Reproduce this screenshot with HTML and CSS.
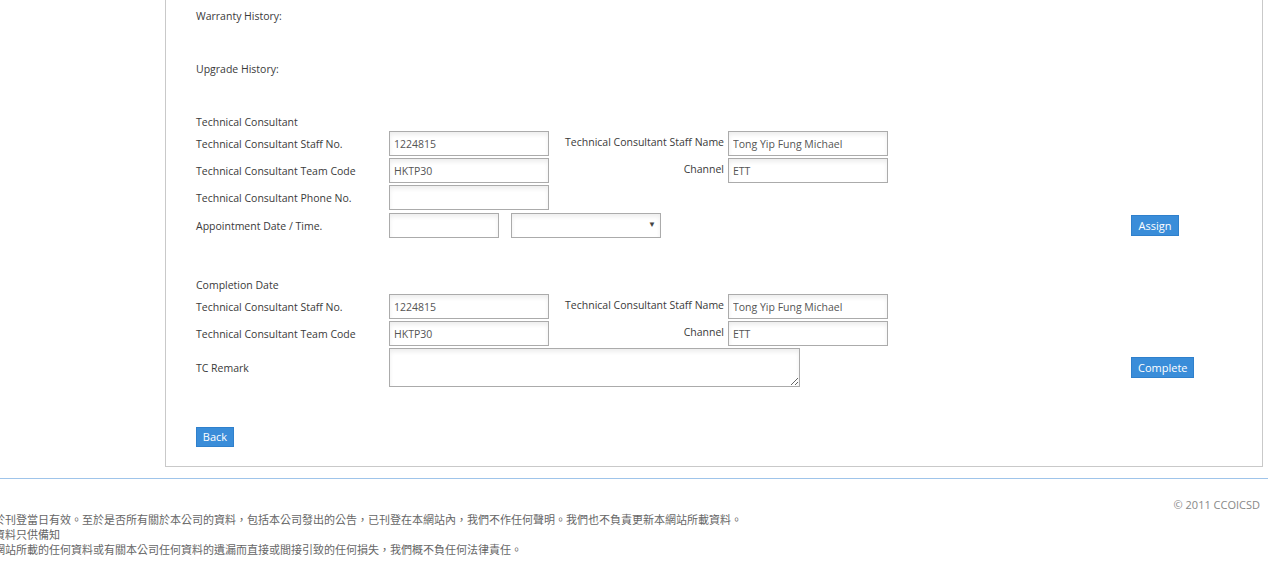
FILE: index.html
```html
<!DOCTYPE html>
<html>
<head>
<meta charset="utf-8">
<link rel="stylesheet" href="styles.css">
</head>
<body>
<div class="panel">
  <div class="section-title history">Warranty History:</div>
  <div class="section-title history">Upgrade History:</div>

  <div class="section-title">Technical Consultant</div>
  <div class="form-grid">
    <div class="lbl">Technical Consultant Staff No.</div>
    <input class="field" type="text" value="1224815">
    <div class="rlbl">Technical Consultant Staff Name</div>
    <input class="field" type="text" value="Tong Yip Fung Michael">

    <div class="lbl">Technical Consultant Team Code</div>
    <input class="field" type="text" value="HKTP30">
    <div class="rlbl">Channel</div>
    <input class="field" type="text" value="ETT">

    <div class="lbl">Technical Consultant Phone No.</div>
    <input class="field" type="text" value="">
    <div class="spacer-3"></div>

    <div class="lbl appt">Appointment Date / Time.</div>
    <div class="datetime appt">
      <input class="field date" type="text" value="">
      <div class="select-wrap"><select class="select"><option></option></select></div>
    </div>
    <button class="btn assign appt">Assign</button>
  </div>

  <div class="section-title completion">Completion Date</div>
  <div class="form-grid">
    <div class="lbl">Technical Consultant Staff No.</div>
    <input class="field" type="text" value="1224815">
    <div class="rlbl">Technical Consultant Staff Name</div>
    <input class="field" type="text" value="Tong Yip Fung Michael">

    <div class="lbl">Technical Consultant Team Code</div>
    <input class="field" type="text" value="HKTP30">
    <div class="rlbl">Channel</div>
    <input class="field" type="text" value="ETT">

    <div class="lbl">TC Remark</div>
    <textarea class="remark"></textarea>
    <button class="btn complete">Complete</button>
  </div>

  <div class="back-row"><button class="btn">Back</button></div>
</div>

<footer class="footer">
  <div class="copyright">© 2011 CCOICSD</div>
  <div class="disclaimer">
    <p>於刊登當日有效。至於是否所有關於本公司的資料，包括本公司發出的公告，已刊登在本網站內，我們不作任何聲明。我們也不負責更新本網站所載資料。</p>
    <p>資料只供備知</p>
    <p>網站所載的任何資料或有關本公司任何資料的遺漏而直接或間接引致的任何損失，我們概不負任何法律責任。</p>
  </div>
</footer>
</body>
</html>
```

FILE: styles.css
```css
html, body {
  margin: 0;
  padding: 0;
  background: #fff;
}

body {
  font-family: "Open Sans", "Liberation Sans", sans-serif;
  font-size: 10.5px;
  color: #3a3a3a;
  width: 1278px;
  overflow: hidden;
}

.panel {
  margin-left: 165px;
  width: 1098px;
  box-sizing: border-box;
  border: 1px solid #c9c9c9;
  border-top: none;
  padding: 8px 0 19px 30px;
}

.section-title {
  line-height: 16px;
  height: 16px;
  margin-bottom: 1px;
}

.section-title.history {
  margin-bottom: 37px;
}

.section-title.completion {
  margin-top: 39px;
}

.form-grid {
  display: grid;
  grid-template-columns: 193px 160px 179px 160px 243px auto;
  grid-auto-rows: auto;
  row-gap: 2px;
  align-items: center;
}

.lbl {
  grid-column: 1;
  line-height: 16px;
  padding-top: 1px;
}

.rlbl {
  text-align: right;
  padding-right: 4px;
  line-height: 16px;
  align-self: start;
  padding-top: 3px;
}

.spacer-3 {
  grid-column: 3 / span 4;
}

.appt {
  margin-top: 1px;
}

.field {
  box-sizing: border-box;
  width: 160px;
  height: 25px;
  margin: 0;
  border: 1px solid #ababab;
  border-radius: 0;
  padding: 0 4px;
  font-family: "Open Sans", "Liberation Sans", sans-serif;
  font-size: 10.5px;
  color: #555;
  background: #fff;
  box-shadow: inset 0 3px 4px rgba(0, 0, 0, 0.07);
  outline: none;
}

.datetime {
  grid-column: 2 / span 2;
  display: flex;
  gap: 12px;
}

.field.date {
  width: 110px;
}

.select-wrap {
  position: relative;
  width: 150px;
  height: 25px;
}

.select {
  box-sizing: border-box;
  width: 150px;
  height: 25px;
  margin: 0;
  border: 1px solid #ababab;
  border-radius: 0;
  background: #fff;
  box-shadow: inset 0 3px 4px rgba(0, 0, 0, 0.07);
  appearance: none;
  -webkit-appearance: none;
  outline: none;
}

.select-wrap::after {
  content: "▼";
  position: absolute;
  right: 5px;
  top: 6px;
  font-size: 8px;
  line-height: 10px;
  color: #444;
  pointer-events: none;
}

.remark {
  grid-column: 2 / span 3;
  box-sizing: border-box;
  width: 411px;
  height: 39px;
  margin: 0;
  border: 1px solid #ababab;
  border-radius: 0;
  background: #fff;
  box-shadow: inset 0 3px 4px rgba(0, 0, 0, 0.07);
  resize: both;
  outline: none;
  display: block;
}

.btn {
  box-sizing: border-box;
  height: 21px;
  padding: 0 6px;
  margin: 0;
  border: 1px solid #2f80cc;
  border-radius: 0;
  background: #3a8dd9;
  color: #fff;
  font-family: "Open Sans", "Liberation Sans", sans-serif;
  font-size: 11px;
  line-height: 19px;
  cursor: pointer;
}

.btn.assign {
  grid-column: 6;
  justify-self: start;
  width: 48px;
}

.btn.complete {
  grid-column: 6;
  justify-self: start;
  width: 63px;
  margin-bottom: 1px;
}

.back-row {
  margin-top: 40px;
  display: flex;
}

.back-row .btn {
  width: 38px;
  height: 20px;
  padding: 0;
  line-height: 18px;
}

.footer {
  margin-top: 11px;
  width: 1268px;
  border-top: 1px solid #9fc4ea;
  padding-top: 18px;
}

.copyright {
  text-align: right;
  padding-right: 8px;
  line-height: 15px;
  color: #888;
  font-size: 11px;
}

.disclaimer {
  margin-left: -6px;
  color: #666;
  font-family: "Noto Sans CJK TC", "Noto Sans CJK SC", sans-serif;
  font-size: 11px;
  white-space: nowrap;
}

.disclaimer p {
  margin: 0;
  line-height: 15px;
  height: 15px;
}
```
